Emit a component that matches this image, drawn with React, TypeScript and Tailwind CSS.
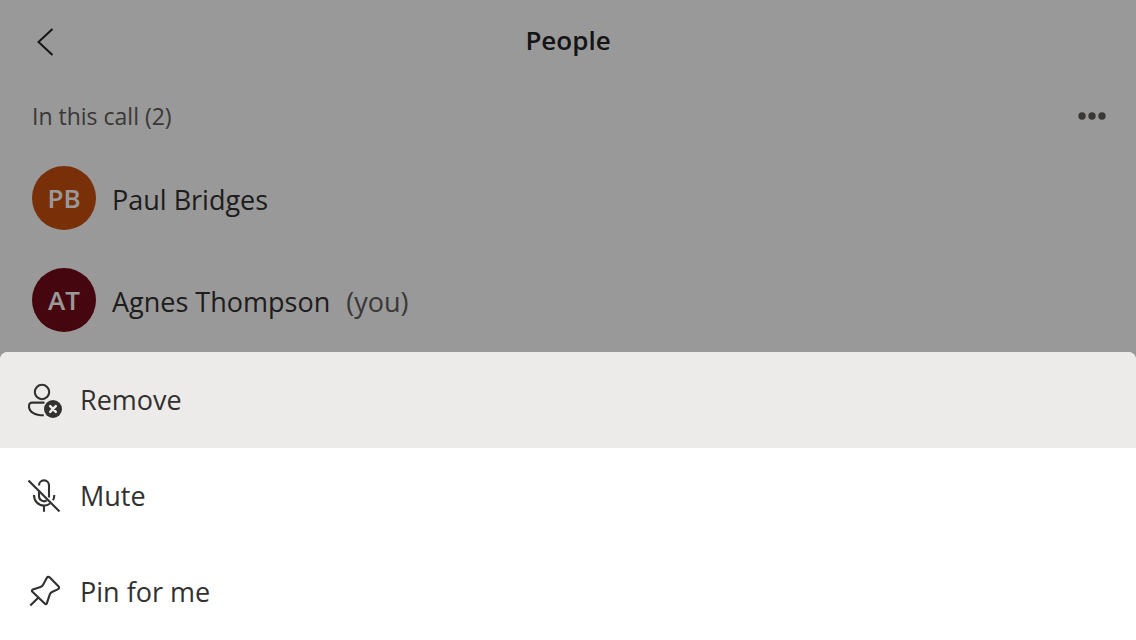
import type { ReactNode } from "react";

type Person = { name: string; initials: string; color: string; note?: string };

const people: Person[] = [
  { name: "Paul Bridges", initials: "PB", color: "bg-[#ca5010]" },
  { name: "Agnes Thompson", initials: "AT", color: "bg-[#750b1c]", note: "(you)" },
];

function RemoveIcon() {
  return (
    <svg className="size-9 shrink-0" viewBox="0 0 36 36" fill="none" stroke="currentColor" strokeWidth="2.1" aria-hidden="true">
      <circle cx="14" cy="10" r="7.2" />
      <path d="M16.500 20.600H4a3 3 0 0 0-3 3v1c0 5 5.500 8.600 14.800 8.600" />
      <circle cx="25" cy="27" r="9" fill="currentColor" stroke="none" />
      <path d="m22.200 24.200 5.600 5.600m0-5.600-5.600 5.600" stroke="#edebe9" strokeWidth="2.5" strokeLinecap="round" />
    </svg>
  );
}

function MuteIcon() {
  return (
    <svg className="size-9 shrink-0" viewBox="0 0 36 36" fill="none" stroke="currentColor" strokeWidth="2.1" aria-hidden="true">
      <path d="M.5 2.500 31.500 33.500" />
      <path d="M11 7.500a5 5 0 0 1 10-.2V18c0 .5-.1 1-.2 1.500" />
      <path d="M11 12.500v5.800a5 5 0 0 0 7.800 4.100" />
      <path d="M6 17c0 6 4.300 10.600 10 10.600 2.300 0 4.400-.8 6.100-2.100M26.300 17c0 2-.4 3.700-1.300 5.300M16 27.500v6.300" />
    </svg>
  );
}

function PinIcon() {
  return (
    <svg className="size-9 shrink-0" viewBox="0 0 36 36" fill="none" stroke="currentColor" strokeWidth="2.1" strokeLinejoin="round" aria-hidden="true">
      <path d="M21.800 3.600 30.400 12.200c1.200 1.200.8 2.600-.7 3.200l-5.700 2.600c-1.100.5-1.800 1.200-2.200 2.300l-2.900 8.800c-.4 1.200-1.300 1.400-2.200.5L4.400 17.800c-.9-.9-.6-1.800.5-2.200l7.600-2.700c1.200-.4 2-1.100 2.600-2.200l3.500-6.500c.8-1.500 2-1.800 3.200-.6Z" />
      <path d="M10.200 23.700 2.300 31.600" />
    </svg>
  );
}

const actions: { label: string; icon: ReactNode; color: string }[] = [
  { label: "Remove", icon: <RemoveIcon />, color: "bg-[#edebe9]" },
  { label: "Mute", icon: <MuteIcon />, color: "bg-white" },
  { label: "Pin for me", icon: <PinIcon />, color: "bg-white" },
];

export default function App() {
  return (
    <div className="min-h-screen bg-white font-['Open_Sans','Noto_Sans',sans-serif] text-[#323130]">
      <header className="grid h-20 grid-cols-[1fr_auto_1fr] items-center px-8 text-[#252423]">
        <button type="button" aria-label="Back" className="justify-self-start">
          <svg className="h-8 w-6" viewBox="0 0 24 32" fill="none" stroke="currentColor" strokeWidth="2" aria-hidden="true">
            <path d="M20.500 5 6.500 18l14 13" />
          </svg>
        </button>
        <h1 className="text-[26px] leading-9 font-semibold">People</h1>
      </header>

      <main className="px-8">
        <div className="flex h-18 items-center justify-between">
          <h2 className="text-[23px] leading-8 text-[#605e5c]">In this call (2)</h2>
          <button type="button" aria-label="More options" className="-mr-1 text-[#605e5c]">
            <svg className="h-8 w-9" viewBox="0 0 36 32" fill="currentColor" aria-hidden="true">
              <circle cx="10" cy="16" r="3.700" />
              <circle cx="20" cy="16" r="3.700" />
              <circle cx="30" cy="16" r="3.700" />
            </svg>
          </button>
        </div>
        <ul>
          {people.map((p) => (
            <li key={p.name} className="flex h-[102px] items-center gap-4 pb-2.5">
              <span className={`flex size-16 shrink-0 items-center justify-center rounded-full text-[26px] font-semibold text-white ${p.color}`}>
                {p.initials}
              </span>
              <span className="pt-1 text-[27px] leading-9">{p.name}</span>
              {p.note && <span className="pt-1 text-[27px] leading-9 text-[#605e5c]">{p.note}</span>}
            </li>
          ))}
        </ul>
      </main>

      <div className="fixed inset-0 flex items-end bg-black/40">
        <ul className="w-full overflow-hidden rounded-t-lg bg-white">
          {actions.map((a) => (
            <li key={a.label}>
              <button type="button" className={`flex h-24 w-full items-center gap-4 px-7 text-left ${a.color}`}>
                {a.icon}
                <span className="text-[27px] leading-9">{a.label}</span>
              </button>
            </li>
          ))}
        </ul>
      </div>
    </div>
  );
}
